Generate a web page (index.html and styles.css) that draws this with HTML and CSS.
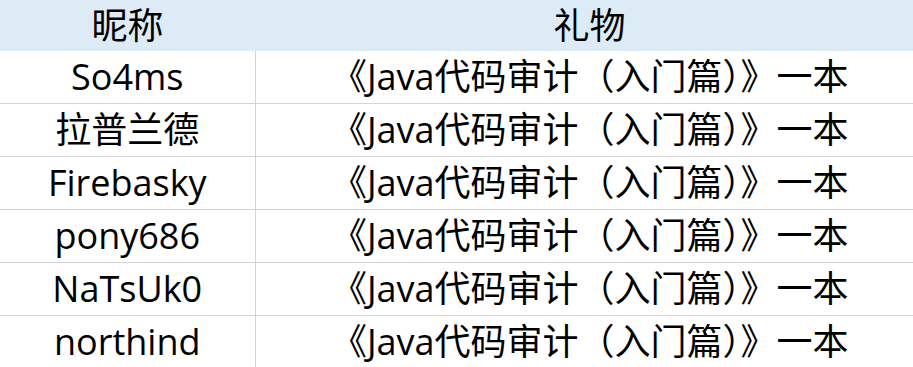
FILE: index.html
```html
<!DOCTYPE html>
<html lang="zh-CN">
<head>
  <meta charset="UTF-8">
  <meta name="viewport" content="width=device-width, initial-scale=1.0">
  <title>礼物名单</title>
  <link rel="stylesheet" href="styles.css">
</head>
<body>

  <table class="gift-table">
    <thead>
      <tr>
        <th class="col-name">昵称</th>
        <th class="col-gift">礼物</th>
      </tr>
    </thead>
    <tbody>
      <tr>
        <td class="col-name">So4ms</td>
        <td class="col-gift">《Java代码审计（入门篇）》一本</td>
      </tr>
      <tr>
        <td class="col-name">拉普兰德</td>
        <td class="col-gift">《Java代码审计（入门篇）》一本</td>
      </tr>
      <tr>
        <td class="col-name">Firebasky</td>
        <td class="col-gift">《Java代码审计（入门篇）》一本</td>
      </tr>
      <tr>
        <td class="col-name">pony686</td>
        <td class="col-gift">《Java代码审计（入门篇）》一本</td>
      </tr>
      <tr>
        <td class="col-name">NaTsUk0</td>
        <td class="col-gift">《Java代码审计（入门篇）》一本</td>
      </tr>
      <tr>
        <td class="col-name">northind</td>
        <td class="col-gift">《Java代码审计（入门篇）》一本</td>
      </tr>
    </tbody>
  </table>

</body>
</html>
```

FILE: styles.css
```css
body {
  margin: 0;
  background-color: #ffffff;
  font-family: "Open Sans", "Noto Sans CJK SC", sans-serif;
  color: #000000;
  overflow: hidden;
}

.gift-table {
  width: 924px;
  border-collapse: collapse;
  table-layout: fixed;
}

.gift-table th,
.gift-table td {
  padding: 0;
  text-align: center;
  font-size: 36px;
  line-height: 1;
  font-weight: normal;
  white-space: nowrap;
}

.gift-table th {
  height: 51px;
  background-color: #ddebf7;
}

.gift-table td {
  height: 52px;
  border-bottom: 1px solid #d4d4d4;
}

.col-name {
  width: 255px;
}

.gift-table td.col-name {
  border-right: 1px solid #d4d4d4;
}
```
